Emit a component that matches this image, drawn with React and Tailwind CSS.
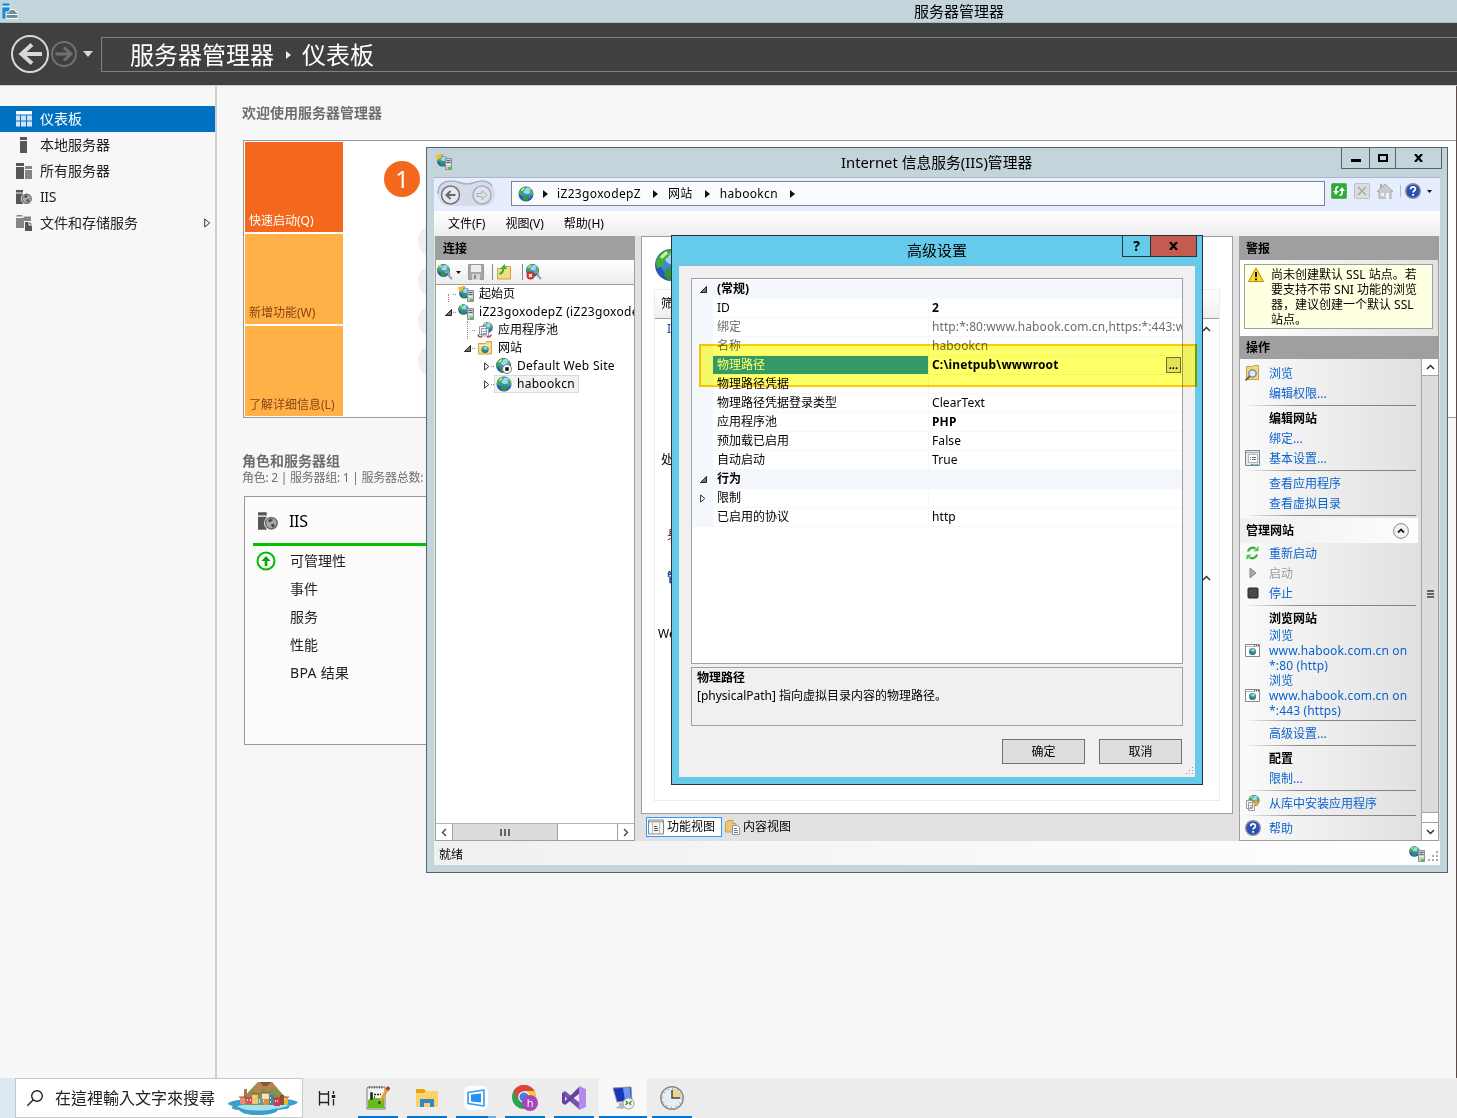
import React from "react";

const S = ({ w = 16, h, box, className = "", children }) => (
  <svg width={w} height={h || w} viewBox={box || `0 0 ${w} ${h || w}`} className={`block shrink-0 ${className}`} fill="none">
    {children}
  </svg>
);

const GlobeShape = ({ cx = 8, cy = 8, r = 7.5 }) => (
  <g transform={`translate(${cx} ${cy}) scale(${r / 8})`}>
    <circle r="8" fill="#2c57b8" />
    <circle cx=".8" cy="-1" r="6" fill="#3f86d6" />
    <ellipse cx="1.5" cy="-3.5" rx="4.6" ry="3.4" fill="#9bd8f5" />
    <path d="M-7.7-1C-7.200-5-3-7.8.5-7.800L-1-4.500-3.600-2.200-3.400.4-6.800 1.600Z" fill="#45ad3c" />
    <path d="M-3 2.600 0 1.200 3.600 2.400 2.200 6.200-.8 7.600-3.400 5.400Z" fill="#2f9a35" />
    <path d="M4.200-5.500 7-3 7.600 1.200 5.400 1.800 4-1.600Z" fill="#4fb648" />
    <path d="M-5-3.600-2-6.400" stroke="#c8f58e" strokeWidth="1.600" />
  </g>
);

const Globe = ({ size = 16, className = "" }) => (
  <S w={size} box="0 0 16 16" className={className}><GlobeShape /></S>
);

const ServerShape = () => (
  <g>
    <path d="M9.500 4.500h6v11h-6z" fill="#c9cdd0" stroke="#8b9094" />
    <path d="M10.500 6.500h4M10.500 8.500h4" stroke="#5f666b" />
    <path d="M10.500 10.500h4" stroke="#f2f2f2" />
    <path d="M12 14h3" stroke="#38d82b" strokeWidth="2" />
  </g>
);

const StartIcon = () => (
  <S>
    <GlobeShape cx={6.500} cy={7} r={5.500} />
    <path d="M7 1.200C4.500.5 3 2 2.500 4" stroke="#f6a81a" strokeWidth="2" /><path d="M0 1h6L1.500 6.500z" fill="#f9b82c" />
    <ServerShape />
  </S>
);
const ServerIcon = () => (
  <S><GlobeShape cx={5.500} cy={5.500} r={5.300} /><ServerShape /></S>
);
const PoolIcon = () => (
  <S>
    <GlobeShape cx={10.500} cy={5.500} r={5.300} />
    <path d="M2.500 4.500h7v8h-7zM4.500 6.500h7v7.500h-7z" fill="#f8f8f8" stroke="#95989c" />
    <path d="M6 9.500h4M6 11.500h4" stroke="#7a9ccb" />
    <path d="M1 12.500c0 2 2 2.800 4 2.300M14 12.500c0 2-2 2.800-4 2.300" stroke="#c4382c" strokeWidth="1.500" />
  </S>
);
const SitesIcon = () => (
  <S>
    <path d="M1.500 3.500h7l1-2h5v12.500h-13z" fill="#f6d98a" stroke="#cfa348" />
    <path d="M2 5.500h12" stroke="#fff4cb" />
    <GlobeShape cx={8} cy={9.500} r={3.500} />
  </S>
);
const StoppedSite = () => (
  <S>
    <GlobeShape cx={7.500} cy={7.500} r={7.500} />
    <circle cx="11" cy="11" r="4.500" fill="#fff" stroke="#777" />
    <path d="M9.200 9.200h3.600v3.600H9.200z" fill="#111" />
  </S>
);
const ConnectIcon = ({ off }) => (
  <S>
    <GlobeShape cx={6.500} cy={6.500} r={6.500} />
    <path d="M8 8.500c3.500-1.500 5 1 4 3.500l3 3" stroke="#8fa3ae" strokeWidth="2" />
    {off && <g><circle cx="4.500" cy="11.500" r="4" fill="#d02d22" /><path d="m3 10 3 3m0-3-3 3" stroke="#fff" strokeWidth="1.300" /></g>}
  </S>
);
const SaveIcon = () => (
  <S>
    <path d="M.5.500h15v15h-15z" fill="#a6a6a6" stroke="#969696" />
    <path d="M3 1h10v7H3z" fill="#ececec" /><path d="M4 10h8v6H4z" fill="#d4d4d4" /><path d="M6 11h2v4H6z" fill="#8b8b8b" />
  </S>
);
const UpFolder = () => (
  <S>
    <path d="M1.500 4.500h6l1-2h6v12.500h-13z" fill="#f5da88" stroke="#cfa348" />
    <path d="M3.500 10c3-1 4-3 4-6" stroke="#2fab2c" strokeWidth="2" /><path d="m4 5 4.500-5L11 5z" fill="#3dbb37" />
  </S>
);
const HelpIcon = () => (
  <S>
    <circle cx="8" cy="8" r="7.300" fill="#2a50b5" stroke="#8d9099" strokeWidth="1.400" />
    <path d="M5.700 6.300C5.700 3.200 10.500 3.300 10.400 6c0 1.700-2.300 1.800-2.300 3.600" stroke="#fff" strokeWidth="1.800" />
    <path d="M7.200 11h1.900v1.800H7.200z" fill="#fff" />
  </S>
);
const BrowserIcon = () => (
  <S>
    <path d="M.500 1.500h14v12H.500z" fill="#fff" stroke="#85898c" /><path d="M1 3.500h13" stroke="#b4b8bb" />
    <path d="M9 2.500h5" stroke="#555" strokeDasharray="1 1" /><GlobeShape cx={7.500} cy={8.500} r={3.500} />
  </S>
);
const SettingsIcon = () => (
  <S>
    <path d="M.500.500h14v15H.500z" fill="#e4e6e8" stroke="#808386" /><path d="M1 2.500h14" stroke="#aaa" />
    <path d="M3.500 4.500h9v8h-9z" fill="#fff" stroke="#aeb3b7" /><path d="M5 7.500h1m1 0h4M5 9.500h1m1 0h4" stroke="#5f7890" />
    <path d="M6 14.500h3" stroke="#29b8ef" /><path d="M10 14.500h3" stroke="#7fa5b5" />
  </S>
);
const BrowseFolder = () => (
  <S>
    <path d="M1.500 1.500h6l1-1h5v14h-12z" fill="#f4d585" stroke="#c9a14a" />
    <circle cx="7.500" cy="8.500" r="3.700" fill="#d7ecf8" stroke="#6c8597" strokeWidth="1.300" />
    <path d="m5 11-4.500 4.500" stroke="#6f5a4d" strokeWidth="1.800" />
  </S>
);
const GalleryIcon = () => (
  <S>
    <GlobeShape cx={9} cy={5.500} r={5.500} />
    <path d="M1.500 5.500h6v8h-6zM3.500 7.500h6v8h-6z" fill="#f9f9f9" stroke="#979b9f" />
    <path d="M5 10.500h3m-3 2h3" stroke="#7b9cc5" />
    <path d="m11 4 1 2.500 3 .5-2.200 1.800.7 2.700L11 10 8.500 11.500l.7-2.700L7 7l3-.5z" fill="#f8a623" />
  </S>
);
const RestartIcon = () => (
  <S>
    <path d="M3 6.500c1-3.500 4.500-4.500 7.500-3" stroke="#3fae3a" strokeWidth="2.400" /><path d="m8.500 6.500 5-.5V1z" fill="#4fc547" />
    <path d="M12 9.500c-1 3.500-4.500 4.500-7.500 3" stroke="#3fae3a" strokeWidth="2.400" /><path d="m6.500 9.500-5 .5v5z" fill="#4fc547" />
  </S>
);

/* Server manager glyphs */
const DashIcon = () => (
  <S><path d="M0 0h16v3.500H0z" fill="#fff" /><path d="M0 4.500h4v5H0zM5 4.500h5v5H5zM11 4.500h5v5h-5zM0 10.500h4v5H0zM5 10.500h5v5H5zM11 10.500h5v5h-5z" fill="#cfe4f4" /></S>
);
const LocalIcon = () => <S><path d="M4 0h7v3H4zM4 4h7v12H4z" fill="#565656" /></S>;
const AllIcon = () => (
  <S><path d="M0 0h8v3H0zM0 4h8v12H0z" fill="#565656" /><path d="M9 3h7v3H9zM9 7h7v9H9z" fill="#858585" /></S>
);
const IisIcon = ({ size = 16 }) => (
  <S w={size} box="0 0 16 16">
    <path d="M0 1h7v2.500H0zM0 4.500h7V15H0z" fill="#565656" />
    <circle cx="10.700" cy="9.700" r="5.800" fill="#fff" /><circle cx="10.700" cy="9.700" r="4.600" fill="#a9a9a9" stroke="#6d6d6d" strokeWidth="1.200" />
    <path d="m8 7.500 2-1.500 2 1-1.500 1.500L9 9zM10 11l2.500-1 1 1.500-1.500 2z" fill="#4c4c4c" />
  </S>
);
const FilesIcon = () => (
  <S><path d="M0 1 1 0h5l1 1.500H0zM0 3h7l1.500-1.500H15V6H8v7H0z" fill="#868686" /><path d="M9 7h4.500L16 9.500V16H9z" fill="#565656" /><path d="M13 7v3h3" stroke="#fff" /></S>
);

const Tri = ({ className = "" }) => <S w={5} h={8} className={className}><path d="M0 0v8l5-4z" fill="#111" /></S>;
const Open = () => <S w={7}><path d="M6.500.500v6h-6z" fill="#777" stroke="#222" /></S>;
const Closed = () => <S w={6} h={9}><path d="m.6.900 4.200 3.600L.6 8.100z" fill="#fff" stroke="#333" /></S>;
const Caret = () => <S w={9} h={6}><path d="m1 5 3.500-3.500L8 5" stroke="#333" strokeWidth="1.500" /></S>;

const side = [
  ["仪表板", <DashIcon />, true],
  ["本地服务器", <LocalIcon />],
  ["所有服务器", <AllIcon />],
  ["IIS", <IisIcon />],
  ["文件和存储服务", <FilesIcon />],
];

function ServerManager() {
  return (
    <div className="flex h-[1078px] flex-col bg-[#f7f7f7]">
      <div className="relative flex h-[23px] shrink-0 items-center border-b border-[#a9bcc2] bg-[#c3d5da]">
        <S w={16} className="ml-[2px]">
          <path d="M0 0h8v3H0zM0 4h8v12H0z" fill="#188ad6" stroke="#fff" strokeWidth=".6" />
          <path d="M4 9h2.500L8 6.500h4.500L14 9h2v6.500H4z" fill="#728e9e" stroke="#fff" /><path d="M4 11.500h12" stroke="#fff" />
        </S>
        <span className="ml-[896px] text-[15px] text-black">服务器管理器</span>
      </div>
      <div className="flex h-[63px] shrink-0 items-center border-b border-[#d0d0d0] bg-[#404040] text-white">
        <S w={38} className="ml-[11px]">
          <circle cx="19" cy="19" r="18" stroke="#d8d8d8" strokeWidth="2" />
          <path d="M31 19H10M21 9.500 10.500 19 21 28.500" stroke="#d8d8d8" strokeWidth="4" />
        </S>
        <S w={26} className="ml-[2px]">
          <circle cx="13" cy="13" r="12" stroke="#707070" strokeWidth="2" />
          <path d="M4.500 13H19M13 6.500 20 13l-7 6.500" stroke="#707070" strokeWidth="3" />
        </S>
        <S w={10} h={6} className="ml-[6px]"><path d="M0 0h10L5 6z" fill="#d8d8d8" /></S>
        <div className="ml-2 flex h-[35px] flex-1 items-center border border-r-0 border-[#808080] pl-[28px] pt-[2px] text-2xl leading-[30px]">
          <span>服务器管理器</span><Tri className="ml-[12px] mr-[11px] invert" /><span>仪表板</span>
        </div>
      </div>
      <div className="flex min-h-0 flex-1">
        <div className="w-[217px] shrink-0 border-r-2 border-[#cfcfcf] pt-5">
          {side.map(([t, ic, on], i) => (
            <div key={t} className={on ? "flex h-[26px] items-center bg-[#0071c1] pl-4 text-sm text-white" : "flex h-[26px] items-center pl-4 text-sm text-[#222]"}>
              {ic}<span className={i === 3 ? "ml-2 tracking-[-0.4px]" : "ml-2"}>{t}</span>
              {i === 4 && <span className="ml-auto mr-[4px]"><S w={7} h={10}><path d="m.7 1 5 4-5 4z" stroke="#333" /></S></span>}
            </div>
          ))}
        </div>
        <div className="relative flex min-w-0 flex-1 flex-col border-r border-[#5b4a45] pl-[25px] pt-[16px]">
          <div className="h-[22px] text-sm leading-[22px] font-bold text-[#6e6e6e]">欢迎使用服务器管理器</div>
          <div className="relative ml-px mt-[16px] flex h-[278px] border border-r-0 border-[#999] bg-white p-px">
            <div className="flex w-[98px] flex-col gap-[2px] text-xs leading-4">
              <div className="flex h-[90px] items-end bg-[#f4681e] pb-[3px] pl-1 text-white">快速启动(Q)</div>
              <div className="flex h-[90px] items-end bg-[#ffb147] pb-[3px] pl-1 text-[#8a4413]">新增功能(W)</div>
              <div className="flex h-[90px] items-end bg-[#ffb147] pb-[3px] pl-1 text-[#8a4413]">了解详细信息(L)</div>
            </div>
            <div className="ml-[41px] mt-[19px] flex h-9 w-9 items-center justify-center rounded-full bg-[#f4681e] pb-px text-2xl text-white">1</div>
            <div className="mt-[82px] -ml-[2px] flex flex-col gap-[6px]">
              {[0, 1, 2, 3].map((i) => <div key={i} className="h-[34px] w-[34px] rounded-full bg-[#f0f0f0]" />)}
            </div>
          </div>
          <div className="mt-[33px] h-5 text-sm leading-5 font-bold text-[#6e6e6e]">角色和服务器组</div>
          <div className="h-4 text-xs leading-[14px] tracking-[-0.26px] text-[#6e6e6e] whitespace-nowrap">角色: 2 | 服务器组: 1 | 服务器总数: 1</div>
          <div className="ml-[2px] mt-[9px] h-[249px] w-[280px] border border-[#999] bg-[#fcfcfc] pl-2 text-sm text-[#222]">
            <div className="flex h-[49px] items-center border-b-[3px] border-[#00c000] pl-[5px] pt-[2px] text-base text-black">
              <IisIcon size={20} /><span className="ml-[11px] tracking-[-0.3px]">IIS</span>
            </div>
            <div className="flex h-7 items-center pl-[3px] pt-[2px]">
              <S w={20}><circle cx="10" cy="10" r="8.500" stroke="#00bd00" strokeWidth="2" /><path d="M10 15V8" stroke="#00a800" strokeWidth="2.600" /><path d="M5.500 10 10 5l4.500 5z" fill="#00a800" /></S>
              <span className="ml-[14px]">可管理性</span>
            </div>
            {["事件", "服务", "性能", "BPA 结果"].map((t) => <div key={t} className="flex h-7 items-center pl-[37px] pt-[2px]"><span className={t[0] === "B" ? "tracking-[0.3px]" : ""}>{t}</span></div>)}
          </div>
        </div>
      </div>
    </div>
  );
}

const TreeRow = ({ pad, mark, icon, children, sel }) => (
  <div className={`flex h-[18px] items-center whitespace-nowrap ${pad}`}>
    <span className="flex w-[7px] shrink-0 justify-center">{mark}</span>
    <span className="ml-px w-[3px] shrink-0 border-t border-dotted border-[#888]" />
    <span className={sel ? "flex h-[18px] items-center border border-[#d9d9d9] bg-[#f3f3f3] pl-px pr-[3px]" : "flex items-center pl-[2px]"}>
      {icon}<span className="ml-[5px]">{children}</span>
    </span>
  </div>
);

function Connections() {
  return (
    <div className="flex w-[200px] shrink-0 flex-col border border-[#9f9f9f] bg-white">
      <div className="flex h-[23px] shrink-0 items-center bg-[#9f9f9f] pl-[7px] font-bold">连接</div>
      <div className="flex h-[25px] shrink-0 items-center border-b border-[#9f9f9f] bg-gradient-to-b from-white to-[#ececec] pl-px">
        <ConnectIcon />
        <S w={5} h={3} className="ml-[3px]"><path d="M0 0h5L2.500 3z" fill="#111" /></S>
        <span className="ml-[7px]"><SaveIcon /></span>
        <span className="ml-2 mr-[3px] h-4 w-px bg-[#888]" /><UpFolder />
        <span className="ml-[10px] mr-[3px] h-4 w-px bg-[#888]" /><ConnectIcon off />
      </div>
      <div className="min-h-0 flex-1 overflow-hidden">
        <TreeRow pad="pl-[9px]" icon={<StartIcon />} mark={<span className="mt-2 h-2 border-l border-dotted border-[#888]" />}>起始页</TreeRow>
        <TreeRow pad="pl-[9px]" icon={<ServerIcon />} mark={<Open />}><span className="tracking-[0.32px]">iZ23goxodepZ (iZ23goxodepZ\</span></TreeRow>
        <TreeRow pad="pl-[28px]" icon={<PoolIcon />} mark={<span className="h-[18px] border-l border-dotted border-[#888]" />}>应用程序池</TreeRow>
        <TreeRow pad="pl-[28px]" icon={<SitesIcon />} mark={<Open />}>网站</TreeRow>
        <TreeRow pad="pl-[47px]" icon={<StoppedSite />} mark={<Closed />}><span className="tracking-[0.28px]">Default Web Site</span></TreeRow>
        <TreeRow pad="pl-[47px]" icon={<Globe />} mark={<Closed />} sel><span className="tracking-[0.28px]">habookcn</span></TreeRow>
      </div>
      <div className="flex h-[17px] shrink-0 items-stretch border-t border-[#b5b5b5] bg-white">
        <div className="flex w-[17px] items-center justify-center border-r border-[#9f9f9f]"><S w={6} h={9}><path d="M5 1 1.500 4.500 5 8" stroke="#444" strokeWidth="1.400" /></S></div>
        <div className="flex w-[105px] items-center justify-center gap-[2px] border-r border-[#9f9f9f] bg-[#dcdcdc]">
          {[0, 1, 2].map((i) => <span key={i} className="h-[7px] w-[2px] bg-[#666]" />)}
        </div>
        <div className="ml-auto flex w-[17px] items-center justify-center border-l border-[#9f9f9f]"><S w={6} h={9}><path d="m1 1 3.500 3.500L1 8" stroke="#444" strokeWidth="1.400" /></S></div>
      </div>
    </div>
  );
}

function Features() {
  return (
    <div className="ml-[6px] flex w-[592px] shrink-0 flex-col">
      <div className="flex h-[578px] flex-col border border-[#9f9f9f] bg-white pl-3 pr-[12px] pt-[11px]">
        <Globe size={34} />
        <div className="mt-[7px] h-[512px] border border-[#ececec]">
          <div className="flex h-[29px] items-center border-b border-[#9f9f9f] bg-gradient-to-b from-white to-[#eee] pl-[6px]">筛选:</div>
          <div className="flex h-5 items-center justify-between pl-3 pr-2 text-[#1e3f9e]"><span>IIS</span><Caret /></div>
          <div className="mt-[111px] h-5 pl-[6px] leading-5">处理程序</div>
          <div className="mt-[55px] h-5 pl-3 leading-5 text-[#500]">身份</div>
          <div className="mt-[23px] flex h-5 items-center justify-between pl-3 pr-2 font-bold text-[#1e3f9e]"><span>管理</span><Caret /></div>
          <div className="mt-[36px] h-5 pl-[3px] leading-5">Web</div>
        </div>
      </div>
      <div className="flex items-center pl-[5px] pt-[3px]">
        <div className="flex h-5 w-[76px] items-center border border-[#3399ff] bg-white pl-px">
          <S><path d="M.5 1h15v14H.5z" fill="#f5f5f5" stroke="#85888b" /><path d="M1 2.500h14" stroke="#a9aeb2" strokeWidth="2" /><path d="M4.500 4v11m7-11v11" stroke="#bbb" /><path d="M6 7.500h3m-3 2h4m-4 2h4" stroke="#555" /></S>
          <span className="ml-[3px]">功能视图</span>
        </div>
        <div className="ml-[2px] flex items-center">
          <S><path d="M1.500 3.500 4 1.500h5v3h3v8.500H1.500z" fill="#eac57a" stroke="#c79f55" /><path d="M8.500 6.500h5l2 2v7h-7z" fill="#fff" stroke="#8896a3" /><path d="M10 9.500h3m-3 2h4m-4 2h4" stroke="#4682c5" /></S>
          <span className="ml-[3px]">内容视图</span>
        </div>
      </div>
    </div>
  );
}

const Act = ({ icon, children, bold, off }) => (
  <div className="flex h-5 items-center pl-[5px] leading-5">
    <span className="w-6 shrink-0">{icon}</span>
    <span className={bold ? "pt-[2px] font-bold text-black" : off ? "pt-[2px] text-[#9a9a9a]" : "pt-[2px] text-[#0b62ce]"}>{children}</span>
  </div>
);
const Sep = () => <div className="flex h-[5px] items-center pl-1 pr-[5px]"><span className="h-px flex-1 bg-gradient-to-r from-transparent via-[#8d8d8d] via-30% to-[#808080]" /></div>;
const Site = ({ tail }) => (
  <div className="flex h-[45px] items-center pl-[5px] leading-[15px]">
    <span className="w-6 shrink-0"><BrowserIcon /></span>
    <span className="tracking-[0.16px] whitespace-nowrap text-[#0b62ce]">浏览<br />www.habook.com.cn on<br />{tail}</span>
  </div>
);

function Actions() {
  return (
    <div className="ml-[6px] flex w-[200px] shrink-0 flex-col border border-[#9f9f9f] bg-[#f0f0f0]">
      <div className="flex h-[23px] shrink-0 items-center bg-[#9f9f9f] pl-[6px] font-bold">警报</div>
      <div className="h-[76px] shrink-0 bg-gradient-to-r from-white to-[#e2e2e2] p-1">
        <div className="flex h-[65px] w-[189px] border border-[#a0a0a0] bg-[#ffffe1] pl-[3px] pt-[2px] leading-[15px]">
          <S><path d="M8 1 15.500 14.500H.500z" fill="#fbd82e" stroke="#b38c12" /><path d="M8 5v5m0 1.500v1.700" stroke="#111" strokeWidth="2" /></S>
          <div className="ml-[7px] whitespace-nowrap">尚未创建默认 SSL 站点。若<br />要支持不带 SNI 功能的浏览<br />器，建议创建一个默认 SSL<br />站点。</div>
        </div>
      </div>
      <div className="flex h-[23px] shrink-0 items-center bg-[#9f9f9f] pl-[6px] font-bold">操作</div>
      <div className="flex min-h-0 flex-1">
        <div className="w-[181px] bg-gradient-to-r from-[#fafafa] to-[#e0e0e0] pt-1">
          <Act icon={<BrowseFolder />}>浏览</Act><Act>编辑权限...</Act><Sep />
          <Act bold>编辑网站</Act><Act>绑定...</Act><Act icon={<SettingsIcon />}>基本设置...</Act><Sep />
          <Act>查看应用程序</Act><Act>查看虚拟目录</Act><Sep />
          <div className="mr-[3px] flex h-[25px] items-center justify-between bg-gradient-to-r from-[#f0f0f0] to-[#fdfdfd] pl-[6px] pr-[9px] font-bold">
            管理网站
            <S w={16}><circle cx="8" cy="8" r="7.400" fill="#f2f2f2" stroke="#888" /><path d="M5 9.500 8 6.500l3 3" stroke="#222" strokeWidth="1.800" /></S>
          </div>
          <Act icon={<RestartIcon />}>重新启动</Act>
          <Act off icon={<S><path d="M5 3v10l6-5z" fill="#a7a7a7" stroke="#888" /></S>}>启动</Act>
          <Act icon={<S><rect x="3" y="3" width="10" height="10" rx="1" fill="#4a4a4a" stroke="#222" /></S>}>停止</Act><Sep />
          <Act bold>浏览网站</Act>
          <Site tail="*:80 (http)" /><Site tail="*:443 (https)" /><Sep />
          <Act>高级设置...</Act><Sep />
          <Act bold>配置</Act><Act>限制...</Act><Sep />
          <Act icon={<GalleryIcon />}>从库中安装应用程序</Act><Sep />
          <Act icon={<HelpIcon />}>帮助</Act>
        </div>
        <div className="flex w-[17px] flex-col border-l border-[#a5a5a5] bg-white">
          <div className="flex h-[17px] items-center justify-center border-b border-[#a5a5a5]"><Caret /></div>
          <div className="flex h-[437px] flex-col items-center justify-center gap-px border-b border-[#a5a5a5] bg-[#dcdcdc]">
            {[0, 1, 2].map((i) => <span key={i} className="h-[2px] w-[7px] bg-[#666]" />)}
          </div>
          <div className="mt-[9px] flex flex-1 items-center justify-center border-t border-[#a5a5a5]"><span className="rotate-180"><Caret /></span></div>
        </div>
      </div>
    </div>
  );
}

function IisManager() {
  return (
    <div className="absolute left-[426px] top-[147px] flex h-[726px] w-[1022px] flex-col border border-[#56636a] bg-[#c3d5da] px-[7px] pb-[7px] text-xs text-black">
      <div className="relative flex h-[29px] shrink-0 items-start">
        <div className="ml-[2px] mt-[6px]"><StartIcon /></div>
        <div className="ml-[389px] text-[14.800px] leading-[29px] whitespace-nowrap">Internet 信息服务(IIS)管理器</div>
        <div className="-mt-px -mr-[2px] ml-auto flex h-[22px] border border-[#56636a]">
          <div className="flex w-[28px] items-center justify-center border-r border-[#56636a]"><span className="mt-1 h-[3px] w-[10px] bg-black" /></div>
          <div className="flex w-[26px] items-center justify-center border-r border-[#56636a]"><span className="h-2 w-[10px] border-2 border-black" /></div>
          <div className="flex w-[45px] items-center justify-center"><S w={9} h={8}><path d="M1 0l7 8M8 0 1 8" stroke="#000" strokeWidth="2.200" /></S></div>
        </div>
      </div>
      <div className="flex h-[34px] shrink-0 items-center border-t border-[#a9b7c6] bg-[#e6edfe] pb-[2px]">
        <S w={60} h={28} className="ml-[3px]">
          <path d="M1 14C1 4 8 1 15 1c7 0 8 3 15 3s8-3 15-3c8 0 13 6 13 14 0 7-5 11-12 11H14C6 26 1 21 1 14Z" fill="#d6dcea" />
          <path d="M1 14C1 4 8 1 15 1c7 0 8 3 15 3s8-3 15-3c5 0 8 2 10 5" stroke="#a9afbb" strokeWidth="1.500" />
          <circle cx="13.500" cy="15" r="9" fill="#e6e8ee" stroke="#70747c" strokeWidth="1.500" /><path d="M18.500 15h-9m4-4-4 4 4 4" stroke="#666a70" strokeWidth="2" />
          <circle cx="45" cy="15" r="9" fill="#dfe3ec" stroke="#a8adb6" strokeWidth="1.500" /><path d="M40 13.500h5V10.500l5 4.500-5 4.500v-3h-5z" stroke="#a8adb6" />
        </S>
        <div className="ml-[14px] flex h-[25px] w-[814px] items-center border border-[#7d8290] bg-[#fafbff] pl-[6px] tracking-[0.34px]">
          <Globe /><Tri className="mx-[9px]" />iZ23goxodepZ<Tri className="ml-[12px] mr-[10px]" />网站<Tri className="ml-[12px] mr-[10px]" />habookcn<Tri className="ml-[12px]" />
        </div>
        <div className="mb-[5px] ml-[6px] flex items-center">
          <S><rect x=".5" y=".5" width="15" height="15" rx="1" fill="#2bad2f" stroke="#68a86a" /><path d="M7.500 4C5 3.500 4.500 6 5 9" stroke="#fff" strokeWidth="1.700" /><path d="M2 8h6l-3 4zM8 8h6l-3-4z" fill="#fff" /><path d="M8.500 12c2.500.500 3-2 2.500-5" stroke="#fff" strokeWidth="1.700" /></S>
          <S className="ml-[7px]"><rect x=".5" y=".5" width="15" height="15" rx="1" fill="#dcdde0" stroke="#bfc0c4" /><path d="m4 4 8 8m0-8-8 8" stroke="#aaa" strokeWidth="1.700" /></S>
          <S className="ml-[7px]"><path d="M0 8.500 8 1l8 7.500h-2V16H2V8.500z" fill="#c9cacc" stroke="#aaa" /><path d="M9 10h3v6H9zM4 10h3v3H4z" fill="#f2f2f2" /><path d="M3 1h2v4H3z" fill="#aaa" /></S>
          <span className="ml-[7px] mr-1 h-3 w-px bg-[#bbb]" /><HelpIcon />
          <S w={5} h={3} className="ml-[6px]"><path d="M0 0h5L2.500 3z" fill="#111" /></S>
        </div>
      </div>
      <div className="flex h-[25px] shrink-0 items-center gap-[20px] bg-gradient-to-b from-white to-[#ededed] pl-[14px]"><span>文件(F)</span><span>视图(V)</span><span>帮助(H)</span></div>
      <div className="flex h-[605px] shrink-0 bg-[#e1e1e1] pl-px"><Connections /><Features /><Actions /></div>
      <div className="flex flex-1 items-center bg-gradient-to-r from-[#f0f0f0] to-white pl-[5px] pr-[3px]">
        <span className="pt-[3px]">就绪</span>
        <span className="mt-[2px] ml-auto"><ServerIcon /></span>
        <S w={10} className="ml-[3px] -mr-px mt-[6px]"><path d="M8 0h2v2H8zM4 4h2v2H4zM8 4h2v2H8zM0 8h2v2H0zM4 8h2v2H4zM8 8h2v2H8z" fill="#aaa" /></S>
      </div>
    </div>
  );
}

const props = [
  ["(常规)", null, "group"],
  ["ID", "2", "bold"],
  ["绑定", "http:*:80:www.habook.com.cn,https:*:443:www.habook.com.cn", "dim"],
  ["名称", "habookcn", "dim"],
  ["物理路径", "C:\\inetpub\\wwwroot", "sel"],
  ["物理路径凭据", ""],
  ["物理路径凭据登录类型", "ClearText"],
  ["应用程序池", "PHP", "bold"],
  ["预加载已启用", "False"],
  ["自动启动", "True"],
  ["行为", null, "group"],
  ["限制", "", "closed"],
  ["已启用的协议", "http"],
];

function PropRow({ name, value, kind }) {
  if (kind === "group")
    return (
      <div className="flex h-[19px] items-center bg-[#f4f7fc] font-bold">
        <span className="flex w-[21px] justify-center pl-px"><Open /></span><span className="ml-1 pb-px">{name}</span>
      </div>
    );
  const dim = kind === "dim" ? "text-[#6d6d6d]" : "";
  return (
    <div className={`flex h-[19px] items-stretch bg-[#f4f7fc] leading-[18px] ${dim}`}>
      <span className="flex w-[21px] shrink-0 items-center justify-center pl-px">{kind === "closed" && <Closed />}</span>
      <span className={kind === "sel" ? "mb-px w-[215px] shrink-0 bg-[#3399ff] pl-1 text-white" : "mb-px w-[215px] shrink-0 bg-white pl-1"}>{name}</span>
      <span className={kind === "bold" || kind === "sel" ? "mb-px ml-px flex min-w-0 flex-1 overflow-hidden bg-white pl-[3px] font-bold tracking-[0.15px] whitespace-nowrap" : "mb-px ml-px flex min-w-0 flex-1 overflow-hidden bg-white pl-[3px] tracking-[0.09px] whitespace-nowrap"}>
        {value}
        {kind === "sel" && <span className="ml-auto mr-px mt-px flex h-4 w-[15px] items-center justify-center border border-[#707070] bg-[#e1e1e1] pb-px text-[11px]">...</span>}
      </span>
    </div>
  );
}

function SettingsDialog() {
  return (
    <div className="absolute left-[671px] top-[235px] flex h-[550px] w-[532px] flex-col border border-[#2b3338] bg-[#66caea] px-[7px] pb-[7px] text-xs text-black">
      <div className="relative flex h-[29px] shrink-0 items-start">
        <div className="ml-[228px] text-[15px] leading-[29px]">高级设置</div>
        <div className="-mt-px -mr-[2px] ml-auto flex h-[22px] border border-[#2b3338]">
          <div className="flex w-[28px] items-center justify-center border-r border-[#2b3338] text-sm font-bold">?</div>
          <div className="flex w-[45px] items-center justify-center bg-[#c45b50]"><S w={9} h={8}><path d="M1 0l7 8M8 0 1 8" stroke="#000" strokeWidth="2.200" /></S></div>
        </div>
      </div>
      <div className="relative flex flex-1 flex-col border-t border-[#8fb9c8] bg-[#f0f0f0] px-3 pt-3">
        <div className="h-[386px] border border-[#a0a0a0] bg-white pt-px">
          {props.map(([n, v, k]) => <PropRow key={n} name={n} value={v} kind={k} />)}
        </div>
        <div className="mt-[3px] h-[59px] border border-[#a0a0a0] pl-[5px] pt-px leading-[18px]">
          <div className="font-bold">物理路径</div>
          <div>[physicalPath] 指向虚拟目录内容的物理路径。</div>
        </div>
        <div className="mt-[13px] flex justify-end gap-[14px] pr-px">
          <div className="flex h-[25px] w-[83px] items-center justify-center border border-[#707070] bg-[#dddddd]">确定</div>
          <div className="flex h-[25px] w-[83px] items-center justify-center border border-[#707070] bg-[#dddddd]">取消</div>
        </div>
        <S w={8} className="absolute bottom-[2px] right-[1px]"><path d="M6 0h1v1H6zM3 3h1v1H3zM6 3h1v1H6zM0 6h1v1H0zM3 6h1v1H3zM6 6h1v1H6z" fill="#999" /></S>
      </div>
      <div className="absolute left-[27px] top-[108px] h-[43px] w-[498px] border-2 border-[#ffcc00] bg-[#ffff66] mix-blend-multiply" />
    </div>
  );
}

const Island = () => (
  <S w={72} h={34}>
    <path d="M1 21c6-3 14-4 22-4h32c7 0 12 1 16 3-2 3-6 3-9 4 2 3-5 3-11 4-2 4-12 5-20 5-9 0-16-1-19-5-6 0-9-2-6-4-3-1-5-1-5-3Z" fill="#3a9fcb" />
    <path d="M10 24c12-3 40-4 52-1-6 4-14 3-20 5-12 1-26 1-32-4Z" fill="#a5e0ee" />
    <path d="M14 18 27 4l4-4h14l5 6 12 13-6 4H18z" fill="#8a8f4a" />
    <path d="m26 6 5-6h14l6 7-6-2-4 4-5-3-5 5z" fill="#b98252" /><path d="M33 0h11l-4 4h-4z" fill="#7e5a45" />
    <path d="M13 15h5v7h-5z" fill="#e58a7c" /><path d="M17 7h3v9h-3z" fill="#b5704a" /><path d="M19 16h6v6h-6z" fill="#dc4f6b" />
    <path d="M25 12h6v10h-6z" fill="#eebf63" /><path d="M31 16h5v6h-5z" fill="#5fa2a5" /><path d="M35 11h7v6h-7z" fill="#f0e0bd" /><path d="M36 17h6v6h-6z" fill="#e7893c" />
    <path d="M42 13h5v10h-5z" fill="#3c8a93" /><path d="M47 16h6v8h-6z" fill="#d93558" /><path d="M53 13h4v10h-4z" fill="#8d4f38" /><path d="M57 15h4v7h-4z" fill="#efb635" />
    <path d="M20 18h1m2 0h1m3-3h1m1 4h1m2-1h1m3-5h1m1 0h1m-3 6h1m6-3h1m4 3h1m1 0h1m6-2h1M27 20h1m4 0h1m10 0h1" stroke="#fff3c9" strokeWidth="1.500" />
    <path d="M12 15h7M24 12h8M34 11h9M46 16h8M18 16h7M56 15h6" stroke="#a34a2c" strokeWidth="1.200" />
  </S>
);

const tasks = [
  <S w={24}>
    <path d="M2 1h17v22H1V2z" fill="#f4f6f2" stroke="#777" /><path d="M2 14c6-4 12 0 16-3v11H2z" fill="#66bb1e" /><path d="M5 7v6h1V7zM8 8.500h2m1 0h2m1 0h1M8 11h1" stroke="#222" strokeWidth="1.600" />
    <path d="M3 1.500h15" stroke="#555" strokeDasharray="1 1.500" strokeWidth="2" /><path d="M22 2 14 16" stroke="#e6a22d" strokeWidth="3" /><path d="m21 4 2-3" stroke="#b33b2a" strokeWidth="3.500" /><path d="m14 15-1 3" stroke="#333" strokeWidth="2" />
  </S>,
  <S w={22} h={20}><path d="M0 1h8l2 2h12v16H0z" fill="#e8a317" /><path d="M0 5h8l2-2h12v16H0z" fill="#fdd264" /><path d="M4 19v-8h14v8h-4v-4H8v4z" fill="#2f87ce" /></S>,
  <S w={24}><rect width="24" height="24" rx="6" fill="#fff" /><path d="m4 6.500 16-2.500v16L4 17.500z" stroke="#2f9cf5" strokeWidth="1.600" strokeLinejoin="round" /><path d="m7 8.500 10-1v9l-10-1z" fill="#2592f2" /></S>,
  <S w={26}>
    <circle cx="12" cy="12" r="12" fill="#2fa251" /><path d="M12 12 1.600 6A12 12 0 0 1 22.400 6Z" fill="#de4337" /><path d="M12 6h10.400A12 12 0 0 1 12 24l5-9z" fill="#fccb2f" /><path d="m1.600 6 5.200 9L12 12V6z" fill="#de4337" />
    <circle cx="12" cy="12" r="5.800" fill="#fff" /><circle cx="12" cy="12" r="4.600" fill="#3d7ee8" /><circle cx="18" cy="18" r="8" fill="#a845bb" />
    <text x="18" y="22" fontSize="11" textAnchor="middle" fill="#fff" fontFamily="Open Sans">h</text>
  </S>,
  <S w={24} h={24}><path d="M0 7 3 5l15 12V24L3 11v4l-3 2z" fill="#7852ac" /><path d="M0 17 3 19 18 7V0L3 15V8L0 7z" fill="#6543a0" /><path d="m17 0 7 3v18l-7 3z" fill="#b58af0" /></S>,
  <S w={24}>
    <path d="m2 2 18-1 1 14-15 1z" fill="#1836b8" stroke="#8c96a1" /><path d="m12 2 7-.5 1 13-6 .5z" fill="#6d96ee" /><path d="M8 17h6l1 3 2 1-6 2-7-1 4-2z" fill="#b4bac0" />
    <circle cx="17.500" cy="17.500" r="5.500" fill="#f2f4f2" stroke="#999" /><path d="m14.500 19 2-2-1.500-2m5.500 0-2 2 1.500 2" stroke="#32963a" strokeWidth="1.400" />
  </S>,
  <S w={24}>
    <circle cx="12" cy="12" r="11.200" fill="#e6eef3" stroke="#888b8e" strokeWidth="1.500" /><path d="M12 12V2.500A9.500 9.500 0 0 1 21.500 12z" fill="#f3d18d" />
    <circle cx="12" cy="12" r="9.300" stroke="#99a9b5" strokeDasharray="1 3.870" strokeWidth="1.600" /><path d="M12 4v8h8" stroke="#404a54" strokeWidth="1.500" />
  </S>,
];

function Taskbar() {
  return (
    <div className="flex h-10 bg-[#ececec]">
      <div className="w-[15px] bg-[#dce9f0]" />
      <div className="flex w-[288px] items-center border border-[#c8c8c8] bg-white pl-[11px] text-base text-[#222]">
        <S w={18} className="-ml-px"><circle cx="11" cy="7" r="5.300" stroke="#222" strokeWidth="1.400" /><path d="m7.300 10.700-6 6" stroke="#222" strokeWidth="1.400" /></S>
        <span className="ml-[11px] pb-[2px] font-['Noto_Sans_CJK_TC',sans-serif] whitespace-nowrap">在這裡輸入文字來搜尋</span>
        <span className="ml-[12px] pt-px"><Island /></span>
      </div>
      <div className="flex w-[50px] items-center pl-[15px]">
        <S w={18}><path d="M1.500 2v3h9V2M1.500 16.500v-3h9v3M1.500 5.500v8m9-8v8M15.500 2v3m0 5v6.500" stroke="#222" strokeWidth="1.300" /><path d="M13.800 6h3.400v3h-3.400z" fill="#222" /></S>
      </div>
      {tasks.map((ic, i) => (
        <div key={i} className={i === 5 ? "ml-[5px] flex w-[48px] flex-col bg-[#f8f8f8]" : i === 6 ? "ml-[5px] flex w-10 flex-col" : i === 0 ? "ml-[5px] flex w-10 flex-col" : "ml-[9px] flex w-10 flex-col"}>
          <span className="flex h-[38px] items-center justify-center pt-[2px]">{ic}</span>
          <span className="flex h-[2px] justify-end bg-[#0076d7]">{i === 2 && <i className="w-2 bg-[#69aee4]" />}</span>
        </div>
      ))}
    </div>
  );
}

export default function App() {
  return (
    <div className="relative h-[1118px] w-[1457px] overflow-hidden bg-[#f7f7f7] font-['Noto_Sans','Noto_Sans_CJK_SC',sans-serif]">
      <ServerManager />
      <Taskbar />
      <IisManager />
      <SettingsDialog />
    </div>
  );
}
